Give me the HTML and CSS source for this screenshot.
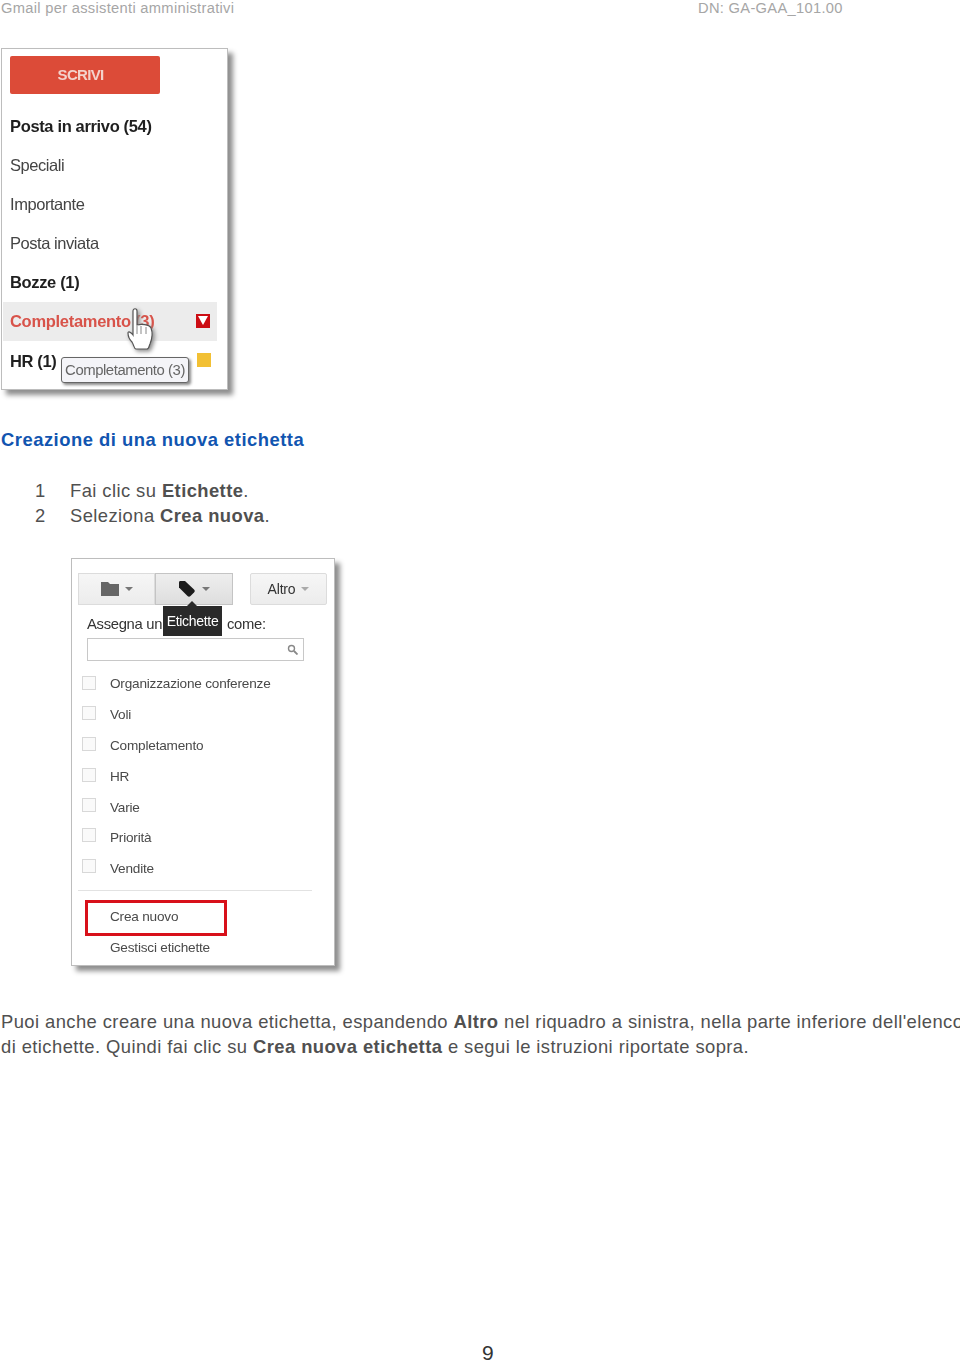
FILE: index.html
```html
<!DOCTYPE html>
<html lang="it">
<head>
<meta charset="utf-8">
<title>Gmail per assistenti amministrativi</title>
<link rel="stylesheet" href="styles.css">
</head>
<body>
<div class="page">
  <header class="head">
    <span class="head-title">Gmail per assistenti amministrativi</span>
    <span class="head-dn">DN: GA-GAA_101.00</span>
  </header>

  <section class="nav shot">
    <div class="compose"><span>SCRIVI</span></div>
    <div class="nav-row bold">Posta in arrivo (54)</div>
    <div class="nav-row">Speciali</div>
    <div class="nav-row">Importante</div>
    <div class="nav-row">Posta inviata</div>
    <div class="nav-row bold">Bozze (1)</div>
    <div class="nav-row active">
      <span>Completamento (3)</span>
      <span class="chip chip-red"><svg width="10" height="9" viewBox="0 0 10 9"><path d="M0 0h10L5 9z" fill="#fff"/></svg></span>
      <svg class="hand" width="30" height="44" viewBox="0 0 30 44">
        <path d="M7 3c0-3 4-3 4 0v14c4-1 12-1 14 3 2 5 1 11-1 16-1 2-1 5-3 5H10c-2 0-2-4-4-7-2-2-4-6-4-9 0-2 3-1 5 2z" fill="#fff" stroke="#555" stroke-width="1.2"/>
        <path d="M11 18v8M15 18v8M20 19v7" stroke="#888" fill="none"/>
      </svg>
    </div>
    <div class="nav-row bold last">
      <span>HR (1)</span>
      <span class="chip chip-yellow"></span>
      <span class="tip">Completamento (3)</span>
    </div>
  </section>

  <h2 class="sub">Creazione di una nuova etichetta</h2>
  <ol class="steps">
    <li><span class="num">1</span><span>Fai clic su <b>Etichette</b>.</span></li>
    <li><span class="num">2</span><span>Seleziona <b>Crea nuova</b>.</span></li>
  </ol>

  <section class="labels shot">
    <div class="tools">
      <div class="group">
        <div class="tool">
          <svg width="18" height="14" viewBox="0 0 18 14"><path d="M0 0h7l2 2h9v12H0z" fill="#666"/></svg>
          <i class="caret"></i>
        </div>
        <div class="tool tool-on">
          <svg width="18" height="18" viewBox="0 0 18 18"><path d="M1 2.500C1 1.500 1.500 1 2.500 1H7l9 8.500c1 1 1 2 0 3L12.500 16c-1 1-2 1-3 0L1 7.500z" fill="#1c1c1c"/></svg>
          <i class="caret"></i>
        </div>
      </div>
      <div class="tool tool-more">Altro <i class="caret caret-light"></i></div>
    </div>
    <div class="assign">Assegna un<span class="tooltip">Etichette</span>come:</div>
    <div class="search">
      <svg width="11" height="11" viewBox="0 0 11 11"><circle cx="4.500" cy="4.500" r="3" fill="none" stroke="#888" stroke-width="1.400"/><path d="M7 7l3.500 3.500" stroke="#888" stroke-width="1.800"/></svg>
    </div>
    <ul class="checks">
      <li><i class="box"></i>Organizzazione conferenze</li>
      <li><i class="box up1"></i>Voli</li>
      <li><i class="box up1"></i>Completamento</li>
      <li><i class="box up1"></i>HR</li>
      <li><i class="box up2"></i>Varie</li>
      <li><i class="box up3"></i>Priorità</li>
      <li><i class="box up3"></i>Vendite</li>
    </ul>
    <div class="rule"></div>
    <div class="create">Crea nuovo</div>
    <div class="manage">Gestisci etichette</div>
  </section>

  <p class="para">Puoi anche creare una nuova etichetta, espandendo <b>Altro</b> nel riquadro a sinistra, nella parte inferiore dell'elenco di etichette. Quindi fai clic su <b>Crea nuova etichetta</b> e segui le istruzioni riportate sopra.</p>

  <footer class="foot">9</footer>
</div>
</body>
</html>
```
FILE: styles.css
```css
* { box-sizing: border-box; }
html, body { margin: 0; padding: 0; background: #fff; }
body { font-family: "Liberation Sans", Arial, sans-serif; color: #505050; }
.page { width: 960px; height: 1363px; display: flex; flex-direction: column; padding-left: 1px; overflow: hidden; }

.head { display: flex; height: 16px; line-height: 16px; font-size: 14.7px; letter-spacing: .3px; color: #a6a6a6; }
.head-title { width: 697px; }

.shot { background: #fff; border: 1px solid #bdbdbd; box-shadow: 5px 5px 5px #8e8e8e; }
.shot > * { filter: blur(.5px); }

.nav { position: relative; width: 227px; height: 342px; margin-top: 32px; padding: 7px 9px 0 8px; font-size: 16.5px; letter-spacing: -.45px; color: #444; }
.compose { width: 150px; height: 38px; padding: 0 9px 2px 0; background: #dc4b38; border-radius: 2px; display: flex; align-items: center; justify-content: center; color: #f3d2cb; font-size: 15px; font-weight: bold; letter-spacing: -.7px; margin-bottom: 13px; }
.nav-row { position: relative; height: 39px; line-height: 39px; display: flex; justify-content: space-between; align-items: center; }
.nav-row.bold { font-weight: bold; color: #1f1f1f; letter-spacing: -.35px; }
.active { width: 214px; background: #ececec; color: #d8534a; font-weight: bold; letter-spacing: -.3px; margin-left: -7px; padding: 0 7px 0 7px; }
.chip { display: block; width: 14px; height: 14px; }
.chip-red { background: #cc0c13; display: flex; align-items: center; justify-content: center; margin-bottom: 2px; }
.chip-yellow { background: #f2c034; margin: -4px 0 0 0; }
.hand { position: absolute; left: 123px; top: 6px; filter: drop-shadow(2px 2px 2px #888); }
.tip { position: absolute; left: 51px; top: 16px; width: 128px; height: 26px; line-height: 24px; border: 1px solid #666; border-radius: 3px; background: #f4f4f8; box-shadow: 2px 2px 3px #888; font-size: 14.9px; font-weight: normal; color: #666; letter-spacing: -.45px; text-align: center; white-space: nowrap; }
.last { width: 201px; padding-top: 2px; }

.sub { margin: 39px 0 0; font-size: 18.4px; letter-spacing: .5px; line-height: 22px; font-weight: bold; color: #1155b0; }
.steps { list-style: none; margin: 27px 0 0; padding: 0 0 0 34px; font-size: 18.4px; letter-spacing: .42px; line-height: 25px; }
.steps li { display: flex; height: 25px; }
.num { width: 35px; }

.labels { position: relative; width: 264px; height: 408px; margin: 30px 0 0 70px; padding: 14px 7px 0 6px; font-size: 13.6px; letter-spacing: -.2px; color: #4a4a4a; }
.tools { display: flex; justify-content: space-between; height: 32px; }
.group { display: flex; }
.tool { display: flex; align-items: center; justify-content: center; gap: 6px; height: 32px; width: 77px; background: linear-gradient(#f6f6f6, #ececec); border: 1px solid #dcdcdc; }
.tool-on { width: 78px; background: linear-gradient(#eee, #dedede); border-color: #c4c4c4; }
.tool-more { color: #333; border-radius: 2px; font-size: 14px; }
.caret { display: block; width: 0; height: 0; border: 4px solid transparent; border-top-color: #777; border-bottom: 0; }
.caret-light { border-top-color: #aaa; }
.assign { position: relative; display: flex; margin: 8px 0 0 9px; height: 22px; line-height: 22px; font-size: 14.8px; letter-spacing: -.3px; color: #333; }
.tooltip { height: 30px; margin: -7px 5px 0 1px; padding: 0 3.5px; line-height: 30px; background: #2a2a2a; color: #fff; font-size: 14px; position: relative; z-index: 1; }
.tooltip::before { content: ""; position: absolute; left: 24px; top: -5px; border: 5px solid transparent; border-top: 0; border-bottom-color: #2a2a2a; }
.search { display: flex; align-items: center; justify-content: flex-end; width: 217px; height: 23px; margin: 3px 0 0 9px; padding-right: 5px; border: 1px solid #c8c8c8; }
.checks { list-style: none; margin: 7px 0 0; padding: 0 0 0 4px; }
.checks li { display: flex; align-items: center; height: 30.9px; font-size: 13.6px; }
.box { display: block; width: 14px; height: 14px; margin-right: 14px; border: 1px solid #d8d8d8; background: #fafafa; }
.up1 { margin-bottom: 2px; }
.up2 { margin-bottom: 4px; }
.up3 { margin-bottom: 6px; }
.rule { width: 234px; height: 1px; margin-top: 5.3px; background: #e2e2e2; }
.create { width: 142px; height: 36px; margin: 9px 0 0 7px; padding-left: 22px; border: 3px solid #d8101a; line-height: 28px; }
.manage { margin: 1px 0 0 32px; line-height: 22px; }

.para { margin: 43px 0 0; font-size: 18.4px; letter-spacing: .42px; line-height: 25px; width: 965px; }
.foot { margin-top: auto; height: 20px; line-height: 20px; padding-left: 481px; font-size: 21px; color: #333; }
```
